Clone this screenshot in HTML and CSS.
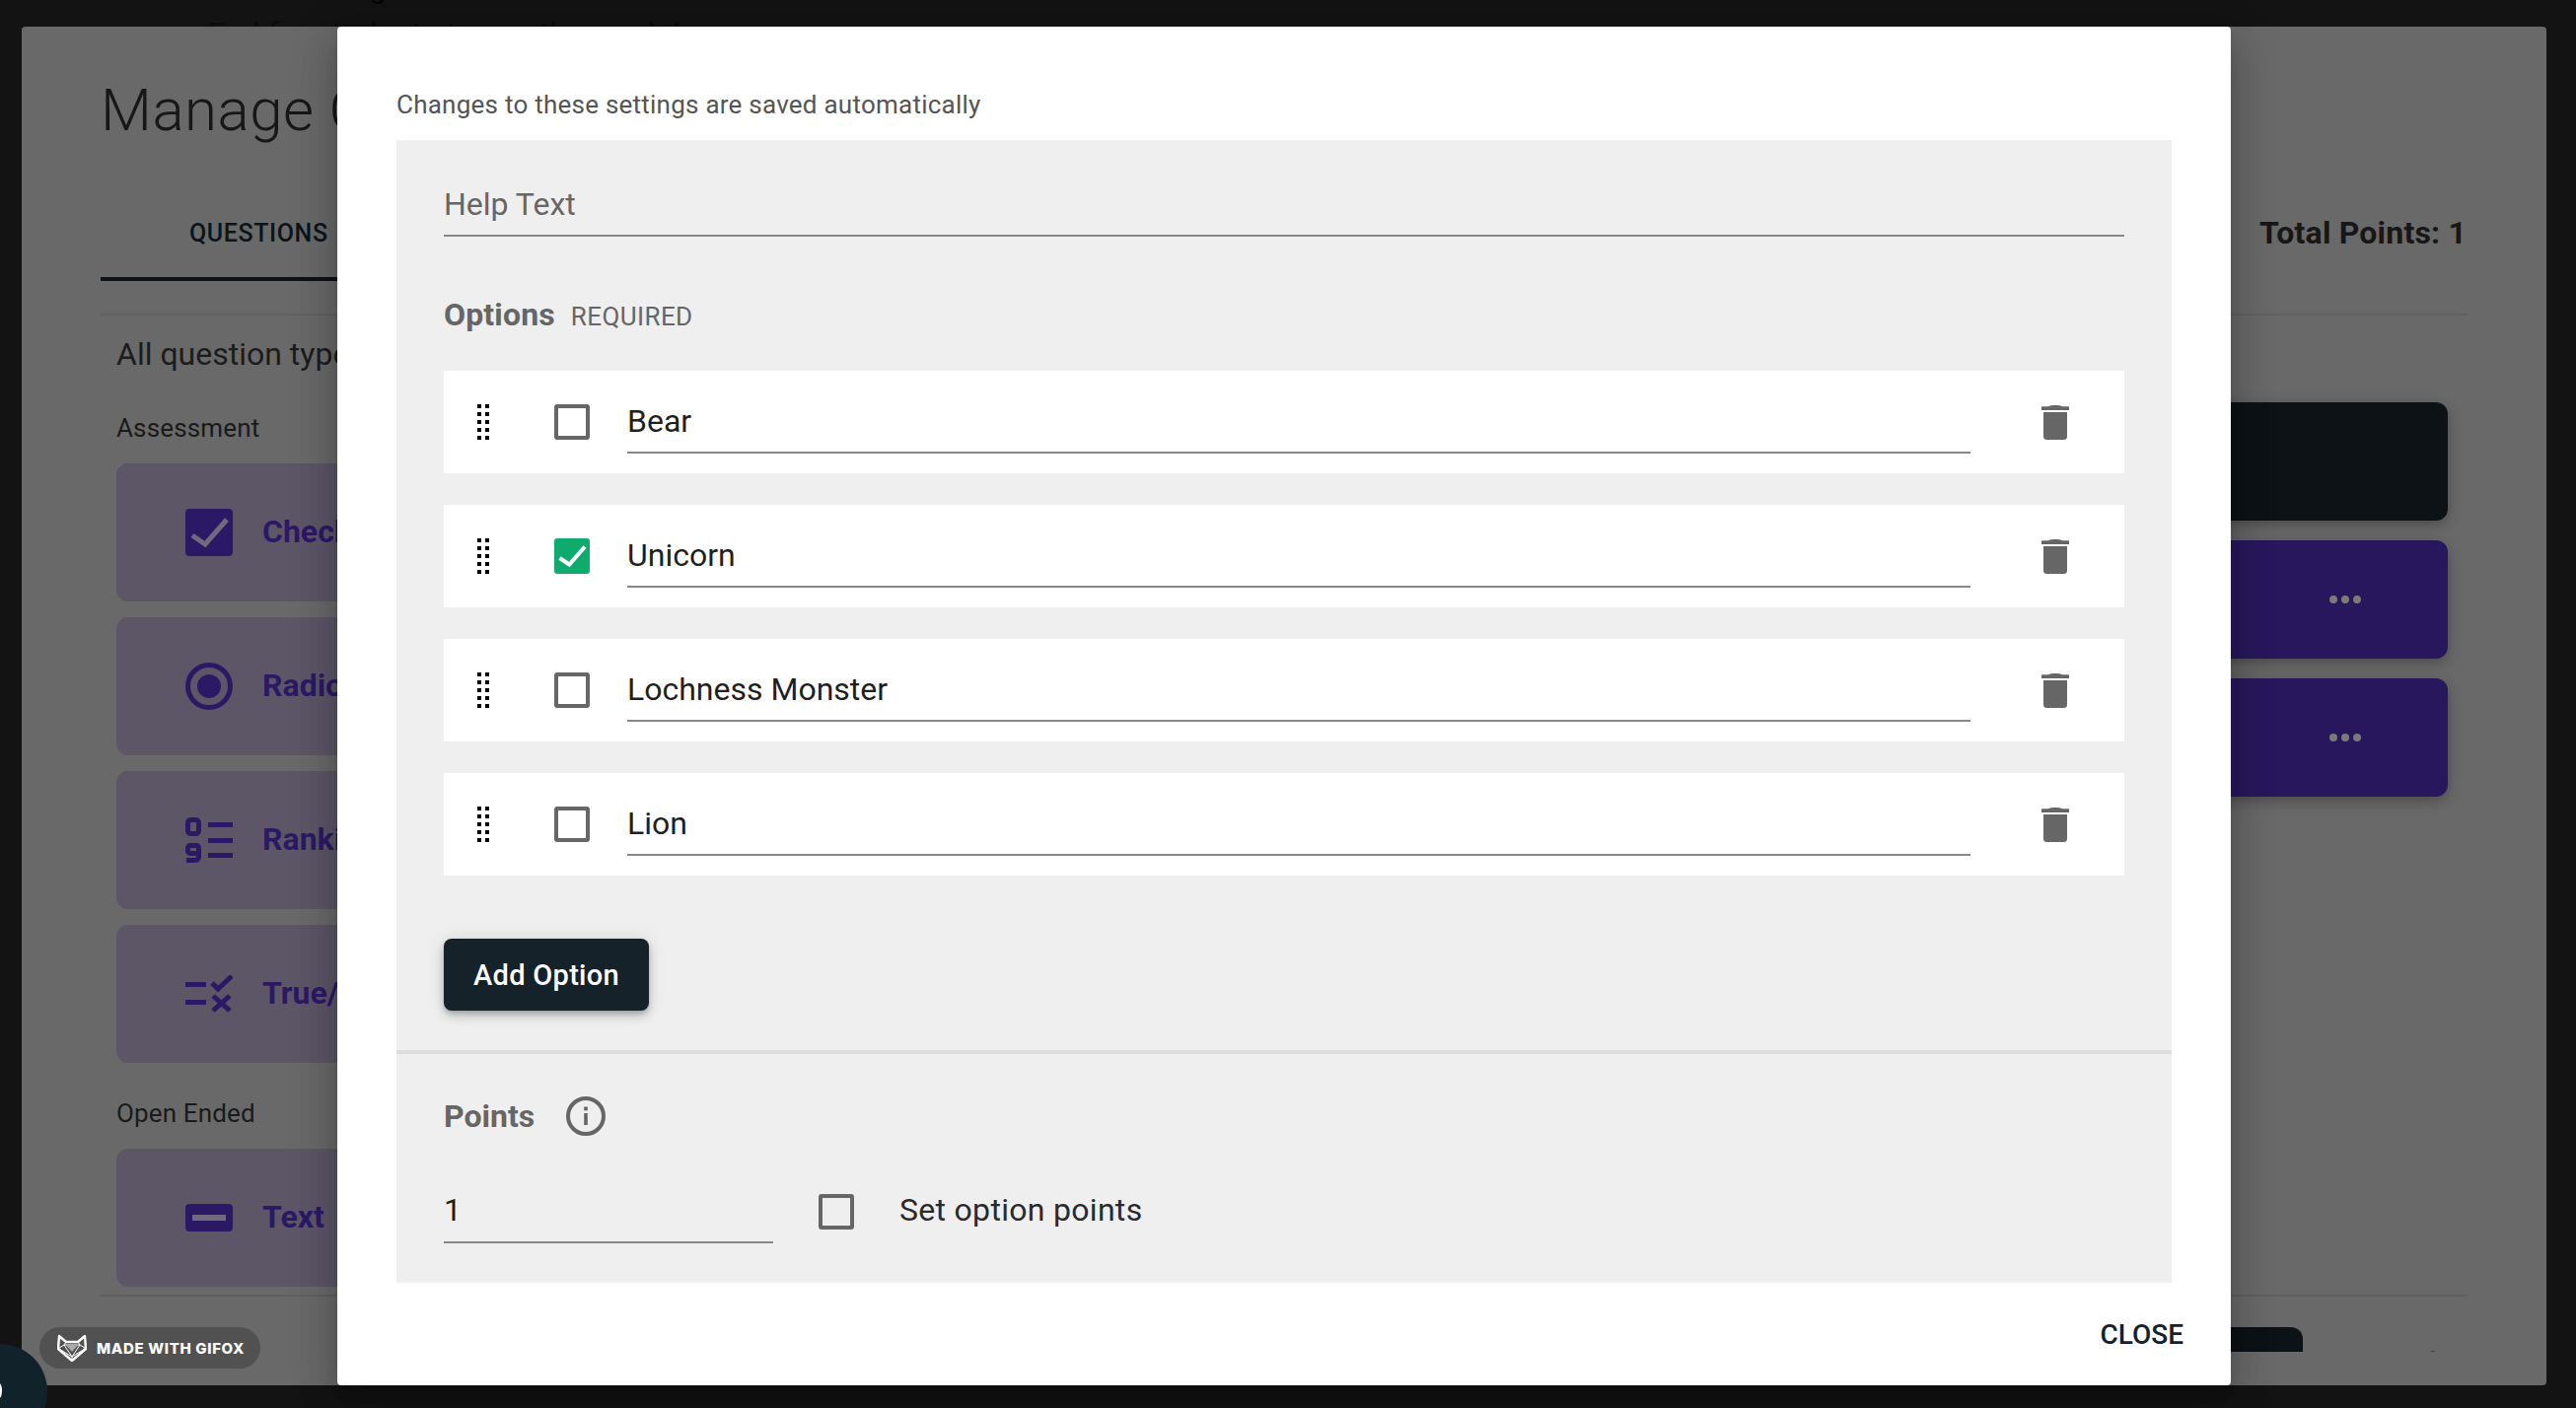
FILE: index.html
```html
<!DOCTYPE html>
<html lang="en">
<head>
<meta charset="utf-8">
<title>Manage Questions</title>
<link rel="stylesheet" href="styles.css">
</head>
<body>
<div class="page">
  <div class="strip">
    <div class="strip-title">Settings</div>
    <div class="strip-line">End for students to see the module</div>
  </div>
  <main class="card">
    <h1 class="title">Manage Questions</h1>
    <div class="tabs">
      <div class="tab">QUESTIONS</div>
      <div class="total">Total Points: 1</div>
    </div>
    <div class="columns">
      <section class="types">
        <p class="types-intro">All question types</p>
        <p class="types-label">Assessment</p>
        <div class="type-list">
          <div class="type">
            <svg class="type-icon" width="48" height="48" viewBox="0 0 48 48"><rect width="48" height="48" rx="4" fill="#2c1966"/><path d="M7 27l13 9L42 11" fill="none" stroke="#6f6a7c" stroke-width="5"/></svg>
            <span>Checkbox</span>
          </div>
          <div class="type">
            <svg class="type-icon" width="48" height="48" viewBox="0 0 48 48"><circle cx="24" cy="24" r="21.5" fill="none" stroke="#2c1966" stroke-width="5"/><circle cx="24" cy="24" r="12" fill="#2c1966"/></svg>
            <span>Radio</span>
          </div>
          <div class="type">
            <svg class="type-icon" width="48" height="46" viewBox="0 0 48 46"><g fill="none" stroke="#2c1966" stroke-width="5"><rect x="2.5" y="2.5" width="11" height="14" rx="3"/><rect x="2.5" y="28.5" width="11" height="8" rx="2.500"/><path d="M13.500 32V40A3.500 3.500 0 0 1 10 43.500H1"/></g><path d="M23 5h25v5H23zM23 21h25v5H23zM23 36h25v5H23z" fill="#2c1966"/></svg>
            <span>Ranking</span>
          </div>
          <div class="type">
            <svg class="type-icon" width="48" height="38" viewBox="0 0 48 38"><path d="M0 7h21v5H0zM0 25h21v5H0z" fill="#2c1966"/><path d="M27 8l6 6L47 1M28 21l17 15M45 21L28 36" fill="none" stroke="#2c1966" stroke-width="5"/></svg>
            <span>True/False</span>
          </div>
        </div>
        <p class="types-label types-label-second">Open Ended</p>
        <div class="type-list">
          <div class="type">
            <svg class="type-icon" width="48" height="28" viewBox="0 0 48 28"><rect width="48" height="28" rx="4" fill="#2c1966"/><rect x="7" y="11" width="34" height="6" fill="#6f6a7c"/></svg>
            <span>Text</span>
          </div>
        </div>
      </section>
      <section class="added">
        <div class="added-card added-dark"></div>
        <div class="added-card"><span class="dots"><i></i><i></i><i></i></span></div>
        <div class="added-card"><span class="dots"><i></i><i></i><i></i></span></div>
      </section>
    </div>
    <div class="card-foot">
      <div class="foot-button"></div>
      <div class="foot-dash"></div>
    </div>
  </main>
</div>

<div class="modal">
  <p class="note">Changes to these settings are saved automatically</p>
  <div class="panel">
    <div class="panel-top">
      <div class="help">Help Text</div>
      <div class="options-head"><strong>Options</strong><span>REQUIRED</span></div>
      <div class="rows">
        <div class="row">
          <span class="drag"><i></i><i></i><i></i><i></i><i></i><i></i><i></i><i></i><i></i><i></i></span>
          <span class="box"></span>
          <div class="field">Bear</div>
          <svg class="trash" width="28" height="36" viewBox="0 0 28 36"><path d="M7 2.200C9 .5 19 .5 21 2.200H28V6H0V2.200zM2 8H26V32.500A3.500 3.500 0 0 1 22.500 36H5.500A3.500 3.500 0 0 1 2 32.500z" fill="#666"/></svg>
        </div>
        <div class="row">
          <span class="drag"><i></i><i></i><i></i><i></i><i></i><i></i><i></i><i></i><i></i><i></i></span>
          <svg class="box-checked" width="36" height="36" viewBox="0 0 36 36"><rect width="36" height="36" rx="3" fill="#0fab6e"/><path d="M5.500 20L15.300 26.500 31 8.500" fill="none" stroke="#fff" stroke-width="4"/></svg>
          <div class="field">Unicorn</div>
          <svg class="trash" width="28" height="36" viewBox="0 0 28 36"><path d="M7 2.200C9 .5 19 .5 21 2.200H28V6H0V2.200zM2 8H26V32.500A3.500 3.500 0 0 1 22.500 36H5.500A3.500 3.500 0 0 1 2 32.500z" fill="#666"/></svg>
        </div>
        <div class="row">
          <span class="drag"><i></i><i></i><i></i><i></i><i></i><i></i><i></i><i></i><i></i><i></i></span>
          <span class="box"></span>
          <div class="field">Lochness Monster</div>
          <svg class="trash" width="28" height="36" viewBox="0 0 28 36"><path d="M7 2.200C9 .5 19 .5 21 2.200H28V6H0V2.200zM2 8H26V32.500A3.500 3.500 0 0 1 22.500 36H5.500A3.500 3.500 0 0 1 2 32.500z" fill="#666"/></svg>
        </div>
        <div class="row">
          <span class="drag"><i></i><i></i><i></i><i></i><i></i><i></i><i></i><i></i><i></i><i></i></span>
          <span class="box"></span>
          <div class="field">Lion</div>
          <svg class="trash" width="28" height="36" viewBox="0 0 28 36"><path d="M7 2.200C9 .5 19 .5 21 2.200H28V6H0V2.200zM2 8H26V32.500A3.500 3.500 0 0 1 22.500 36H5.500A3.500 3.500 0 0 1 2 32.500z" fill="#666"/></svg>
        </div>
      </div>
      <button class="add" type="button">Add Option</button>
    </div>
    <div class="panel-bottom">
      <div class="points-head">
        <strong>Points</strong>
        <svg width="40" height="40" viewBox="0 0 40 40"><circle cx="20" cy="20" r="18" fill="none" stroke="#666" stroke-width="4"/><rect x="18.200" y="17" width="3.600" height="12" fill="#666"/><rect x="18.200" y="10.500" width="3.600" height="3.800" fill="#666"/></svg>
      </div>
      <div class="points-row">
        <div class="points-field">1</div>
        <span class="box box-points"></span>
        <span class="points-label">Set option points</span>
      </div>
    </div>
  </div>
  <div class="modal-foot"><span class="close">CLOSE</span></div>
</div>

<div class="gifox">
  <svg width="30" height="28" viewBox="0 0 30 28"><g fill="none" stroke="#fff" stroke-linejoin="round"><path d="M2 2L9 8H21L28 2L29 15L15 27L1 15Z" stroke-width="2.400"/><path d="M7 11H23L15 23ZM2 14L7 11M28 14L23 11M9 8L7 11M21 8L23 11M15 27V23M2 15L15 23M28 15L15 23" stroke-width="1"/></g><path d="M9.500 12H20.500L15 18Z" fill="#aaa"/></svg>
  <span>MADE WITH GIFOX</span>
</div>
<div class="chat"><i></i></div>
</body>
</html>
```

FILE: styles.css
```css
* { box-sizing: border-box; }
html, body { margin: 0; height: 1428px; overflow: hidden; }
body { background: #131313; font-family: Roboto, "Liberation Sans", sans-serif; color: #1c1c1c; position: relative; }
p, h1 { margin: 0; }

.page { height: 1428px; padding: 0 30px 23px 22px; }
.strip { height: 27px; overflow: hidden; }
.strip-title { margin-top: -30px; height: 35px; padding-left: 270px; font-size: 32px; line-height: 35px; color: #060606; }
.strip-line { margin-top: 7px; padding-left: 188px; font-size: 32px; line-height: 44px; color: #0b0b0b; }

.card { height: 1378px; background: #696969; border-radius: 4px; padding: 50px 81px 0 80px; overflow: hidden; }
.title { font-size: 60px; line-height: 70px; font-weight: 300; letter-spacing: .5px; color: #171717; white-space: nowrap; }
.tabs { display: flex; justify-content: space-between; align-items: flex-start; margin-top: 73px; }
.tab { width: 700px; padding: 0 90px 27px; border-bottom: 4px solid #0c1419; font-size: 25px; line-height: 34px; font-weight: 500; letter-spacing: .6px; color: #0c1419; }
.total { margin: -6px 0 0 0; font-size: 32px; line-height: 44px; font-weight: 700; letter-spacing: .2px; color: #171717; }

.columns { display: flex; height: 997px; margin-top: 33px; border-top: 2px solid #616161; border-bottom: 2px solid #616161; }
.types { width: 800px; padding-left: 16px; }
.types-intro { margin-top: 17px; font-size: 32px; line-height: 44px; color: #1c1c1c; white-space: nowrap; }
.types-label { margin-top: 35px; font-size: 26px; line-height: 36px; letter-spacing: .15px; color: #1a1a1a; }
.types-label-second { margin-top: 33px; }
.type-list { display: flex; flex-direction: column; gap: 16px; margin-top: 18px; }
.type { display: flex; align-items: center; height: 140px; padding-left: 70px; background: #5c5667; border-radius: 12px; font-size: 32px; font-weight: 700; color: #2c1966; }
.type-icon { flex: none; }
.type span { position: absolute; left: 266px; margin-top: -2px; }

.added { flex: 1; display: flex; flex-direction: column; gap: 20px; padding: 88px 19px 0 300px; }
.added-card { height: 120px; display: flex; align-items: center; background: #28175c; border-radius: 12px; box-shadow: 0 4px 14px rgba(0, 0, 0, .3); position: relative; }
.added-dark { background: #0c1215; }
.dots { position: absolute; left: 1160px; display: flex; gap: 4px; }
.dots i { width: 8px; height: 8px; border-radius: 50%; background: #7a7a7a; }

.card-foot { display: flex; height: 56px; align-items: flex-start; overflow: hidden; padding-top: 31px; }
.foot-button { width: 400px; height: 40px; margin-left: 1833px; background: #0c1215; border-radius: 12px 12px 0 0; }
.foot-dash { width: 4px; height: 1px; margin: 24px 0 0 130px; background: #444; }

.modal { position: absolute; left: 342px; top: 27px; width: 1920px; height: 1378px; padding: 61px 60px 0; background: #fff; border-radius: 4px; box-shadow: 0 11px 15px -7px rgba(0, 0, 0, .2), 0 24px 38px 3px rgba(0, 0, 0, .14), 0 9px 46px 8px rgba(0, 0, 0, .12); }
.note { font-size: 26px; line-height: 36px; letter-spacing: .24px; color: #555; margin-bottom: 18px; }
.panel { background: #efefef; }
.panel-top { padding: 43px 48px 40px; border-bottom: 4px solid #ddd; }
.help { padding-bottom: 9px; border-bottom: 2px solid #888; font-size: 32px; line-height: 44px; color: #666; }
.options-head { display: flex; align-items: baseline; gap: 16px; height: 44px; margin: 57px 0 35px; font-size: 32px; line-height: 44px; letter-spacing: .15px; color: #666; }
.options-head strong { font-weight: 700; }
.options-head span { font-size: 26px; letter-spacing: .4px; color: #666; }
.rows { display: flex; flex-direction: column; gap: 32px; }
.row { display: flex; align-items: flex-start; height: 104px; padding: 29px 0 0 34px; background: #fff; }
.drag { display: grid; grid-template-columns: 4px 4px; gap: 4px; margin-top: 5px; flex: none; }
.drag i { width: 4px; height: 4px; background: #000; }
.box { flex: none; display: block; width: 36px; height: 36px; margin: 5px 0 0 66px; border: 4px solid #666; border-radius: 3px; background: transparent; }
.box-checked { flex: none; margin: 5px 0 0 66px; }
.field { flex: none; width: 1362px; margin-left: 38px; padding-bottom: 9px; border-bottom: 2px solid #888; font-size: 32px; line-height: 44px; color: #1f1f1f; }
.trash { flex: none; margin: 5px 0 0 72px; }
.add { display: block; width: 208px; height: 73px; margin-top: 64px; padding: 0; border: 0; border-radius: 8px; background: #15222a; color: #fff; font-family: Roboto, sans-serif; font-size: 29px; font-weight: 500; letter-spacing: .3px; box-shadow: 0 3px 5px -1px rgba(0, 0, 0, .2), 0 6px 10px 0 rgba(0, 0, 0, .14), 0 1px 18px 0 rgba(0, 0, 0, .12); }
.panel-bottom { padding: 41px 48px 40px; }
.points-head { display: flex; align-items: center; gap: 32px; font-size: 32px; line-height: 44px; color: #666; }
.points-head strong { font-weight: 700; }
.points-row { display: flex; align-items: flex-start; margin-top: 51px; }
.points-field { width: 334px; padding-bottom: 10px; border-bottom: 2px solid #888; font-size: 32px; line-height: 44px; color: #1f1f1f; }
.box-points { margin: 6px 0 0 46px; }
.points-label { margin-left: 46px; font-size: 32px; line-height: 44px; letter-spacing: .3px; color: #2a2a2a; }
.modal-foot { display: flex; justify-content: flex-end; padding-top: 32px; margin-right: -12px; }
.close { font-size: 28px; line-height: 41px; font-weight: 500; color: #15222a; }

.gifox { position: absolute; left: 40px; top: 1346px; width: 224px; height: 42px; display: flex; align-items: center; gap: 10px; padding-left: 18px; background: #515151; border-radius: 21px; }
.gifox span { font-family: Inter, sans-serif; font-size: 15px; font-weight: 800; letter-spacing: .65px; color: #fff; white-space: nowrap; }
.chat { position: absolute; left: -48px; top: 1363px; width: 96px; height: 96px; border-radius: 50%; background: #12222b; }
.chat i { position: absolute; left: 45px; top: 40px; width: 5px; height: 15px; border-right: 2px solid #fff; border-radius: 50%; }
```
